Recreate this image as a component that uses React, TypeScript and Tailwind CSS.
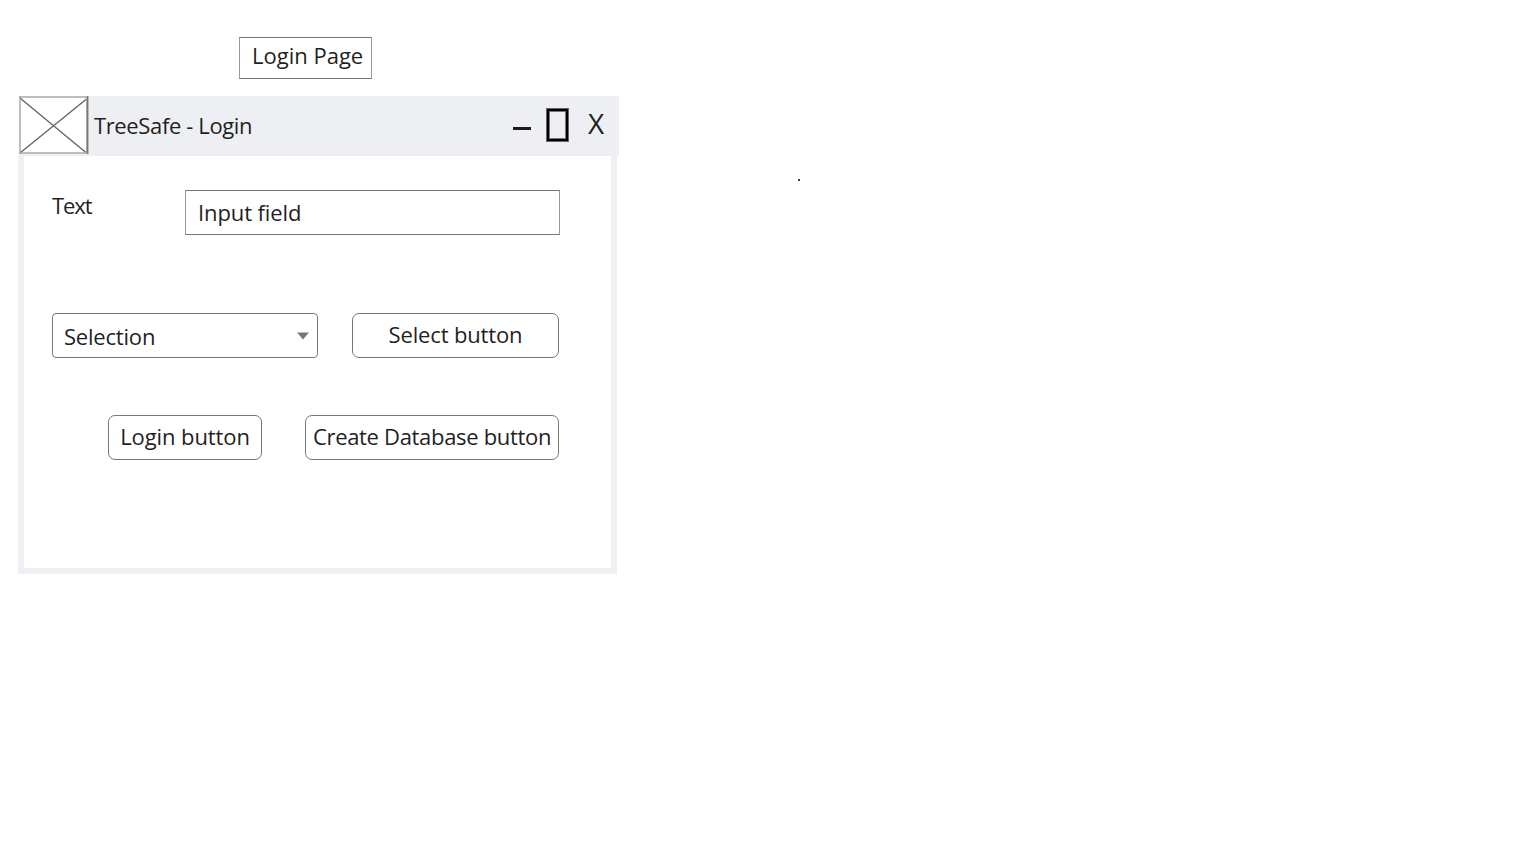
import type { ReactNode } from "react";

function Label({ className = "", children }: { className?: string; children: ReactNode }) {
  return <span className={`block shrink-0 whitespace-pre leading-[30px] ${className}`}>{children}</span>;
}

function TitleBar() {
  return (
    <header className="ml-px flex h-[60px] w-[600px] items-start bg-[#eeeff3]">
      <svg width="70" height="58" viewBox="0 0 70 58" className="shrink-0">
        <rect x="0" y="0" width="70" height="58" fill="#fff" />
        <path d="M1 2L67.5 57M1 57L67.5 3" stroke="#666" strokeWidth="1.4" />
        <path d="M0 1H69M0 57H69M1 0V58" stroke="#a8a8a8" strokeWidth="1.5" fill="none" />
        <path d="M67.5 1V57" stroke="#aaa" strokeWidth="1" />
        <path d="M68.75 0V58" stroke="#777" strokeWidth="1.5" />
      </svg>
      <Label className="ml-[5px] mt-[14px] w-[419px] tracking-[-0.37px]">TreeSafe - Login</Label>
      <div className="mt-[31px] h-[3px] w-[18px] bg-[#1c1c20]" />
      <div className="ml-[15px] mt-[12px] h-[34px] w-[23px] border border-[#666]">
        <div className="h-full w-full border-2 border-black">
          <div className="h-full w-full border border-[#777]" />
        </div>
      </div>
      <Label className="ml-[19px] mt-[12px] text-[28px]">X</Label>
    </header>
  );
}

export default function App() {
  return (
    <main className="flex min-h-screen w-full items-start overflow-hidden bg-white font-['Open_Sans','Noto_Sans',sans-serif] text-[22px] text-[#1f1f1f]">
      <div className="ml-[18px] w-[601px] shrink-0 pt-[37px]">
        <h1 className="ml-[221px] h-[42px] w-[133px] border border-x-[#999] border-y-[#777] pl-[12px] pt-[2px]">
          <Label>Login Page</Label>
        </h1>
        <section className="mt-[17px]">
          <TitleBar />
          <div className="h-[418px] w-[599px] border-x-[6px] border-b-[6px] border-[#eff0f3] pl-[28px] pt-[34px]">
            <div className="flex items-start">
              <Label className="w-[133px] tracking-[-1.1px]">Text</Label>
              <div className="h-[45px] w-[375px] border border-x-[#999] border-y-[#777] pl-[12px] pt-[6px]">
                <Label className="tracking-[-0.1px]">Input field</Label>
              </div>
            </div>
            <div className="mt-[78px] flex items-start">
              <div className="flex h-[45px] w-[266px] justify-between rounded-[4px] border border-[#777] pl-[11px] pr-[8px] pt-[7px]">
                <Label className="tracking-[-0.2px]">Selection</Label>
                <svg width="12" height="8" viewBox="0 0 12 8" className="mt-[11px]">
                  <path d="M0 0.5H12L6 7.5Z" fill="#777" />
                </svg>
              </div>
              <button className="ml-[34px] flex h-[45px] w-[207px] justify-center rounded-[7px] border border-[#777] pt-[5px]">
                <Label className="tracking-[-0.15px]">Select button</Label>
              </button>
            </div>
            <div className="ml-[56px] mt-[57px] flex items-start">
              <button className="flex h-[45px] w-[154px] justify-center rounded-[7px] border border-[#777] pt-[5px]">
                <Label className="tracking-[-0.1px]">Login button</Label>
              </button>
              <button className="ml-[43px] flex h-[45px] w-[254px] justify-center rounded-[7px] border border-[#777] pt-[5px]">
                <Label className="tracking-[-0.32px]">Create Database button</Label>
              </button>
            </div>
          </div>
        </section>
      </div>
      <div className="ml-[179px] mt-[179px] h-[2px] w-[2px] bg-[#444]" />
    </main>
  );
}
